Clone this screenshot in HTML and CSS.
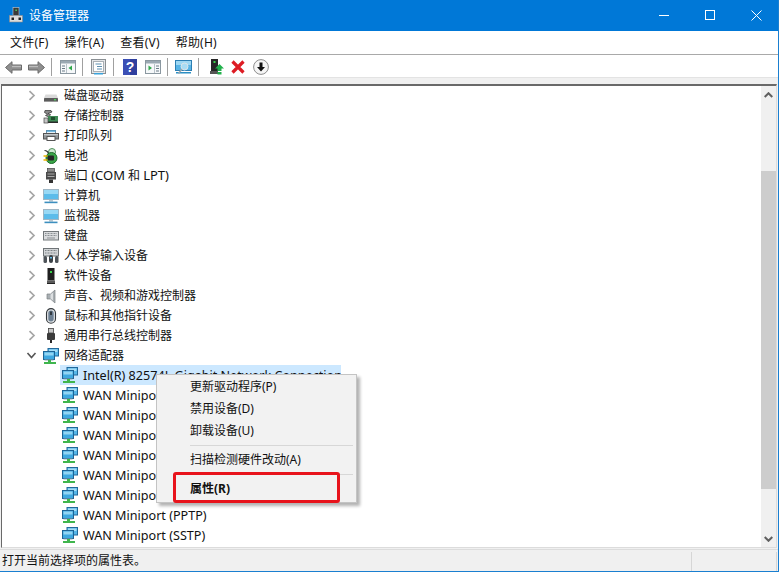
FILE: index.html
```html
<!DOCTYPE html>
<html lang="zh-CN">
<head>
<meta charset="utf-8">
<title>设备管理器</title>
<link rel="stylesheet" href="styles.css">
</head>
<body>
<svg class="defs" xmlns="http://www.w3.org/2000/svg">
  <symbol id="chev" viewBox="0 0 9 11"><path d="M2.500 1.200 7 5.500 2.500 9.800" fill="none" stroke="#a6a6a6" stroke-width="1.700"/></symbol>
  <symbol id="chev-open" viewBox="0 0 11 9"><path d="M1.500 2 5.500 6.500 9.500 2" fill="none" stroke="#555" stroke-width="1.600"/></symbol>
  <symbol id="i-disk" viewBox="0 0 16 16"><path d="M2.500 6.500h11l1.500 3.500H1z" fill="#d9d9d9"/><rect x="1" y="10" width="14" height="3.500" rx=".6" fill="#5c5c5c"/><rect x="1" y="13" width="14" height="1" fill="#9a9a9a"/><rect x="11" y="11" width="2" height="1.400" fill="#4fd05a"/></symbol>
  <symbol id="i-storage" viewBox="0 0 16 16"><path d="M2 2.500h6l1 1.500-4 1.500 2.500 1L6 9 2.500 7.500l2-1.200L1.500 4.500z" fill="#8a8a8a" stroke="#2e2e2e" stroke-width=".7"/><rect x="5" y="8" width="10" height="6" fill="#3f8a55"/><rect x="5" y="13.500" width="10" height="1.500" fill="#2b2b2b"/><rect x="8" y="9" width="4" height="3" fill="#1e4d2c"/><rect x="1" y="10" width="4" height="5" fill="#c6c6c6" stroke="#444" stroke-width=".7"/></symbol>
  <symbol id="i-printer" viewBox="0 0 16 16"><rect x="3.500" y="2.500" width="9" height="3" fill="#e8f2f8" stroke="#6a8aa0"/><rect x="3.500" y="2.500" width="9" height="1.200" fill="#46a3d8"/><rect x=".5" y="5.500" width="15" height="5.500" fill="#8e9498" stroke="#555"/><rect x="4" y="8.500" width="8" height="4" fill="#fff" stroke="#555"/><rect x="1" y="6.200" width="14" height="1" fill="#d0d4d6"/></symbol>
  <symbol id="i-battery" viewBox="0 0 16 16"><circle cx="9" cy="4" r="3.500" fill="#cfe9d2" stroke="#4f8f5b"/><path d="M1.500 2.500c2 0 4 1.500 4 4" fill="none" stroke="#333" stroke-width="1.200"/><circle cx="8.500" cy="10" r="5.500" fill="#3aa748" stroke="#1e6a2a"/><rect x="4.500" y="7.500" width="6.500" height="5" rx="1" fill="#262626"/><path d="M.5 8h4M.5 12h4" stroke="#f0b400" stroke-width="1.400"/></symbol>
  <symbol id="i-port" viewBox="0 0 16 16"><rect x="4.500" y=".5" width="7" height="3.500" fill="#8c8c8c" stroke="#444" stroke-width=".7"/><rect x="3" y="4" width="10" height="7.500" fill="#4a4a4a"/><rect x="4.500" y="5.500" width="7" height="1" fill="#a8a8a8"/><rect x="4.500" y="8" width="7" height="1" fill="#a8a8a8"/><rect x="6" y="11.500" width="4" height="3.500" fill="#333"/></symbol>
  <symbol id="i-monitor" viewBox="0 0 16 16"><rect x=".5" y="1.500" width="15" height="10" fill="#5cbcea" stroke="#9fb6c4"/><rect x="1" y="2" width="14" height="4" fill="#98d9f5"/><rect x="6" y="12" width="4" height="1.600" fill="#b9c8d1"/><rect x="1.500" y="13.600" width="13" height="1.600" fill="#3d8fbf"/></symbol>
  <symbol id="i-keyboard" viewBox="0 0 16 16"><rect x=".5" y="3.500" width="15" height="8.500" fill="#dadcde" stroke="#73787b"/><path d="M2 5.500h12M2 7.500h12" stroke="#8b9094" stroke-width="1" stroke-dasharray="1 .5"/><rect x="4" y="9.500" width="8" height="1" fill="#8b9094"/></symbol>
  <symbol id="i-hid" viewBox="0 0 16 16"><rect x=".5" y=".5" width="15" height="7.500" fill="#d2d5d7" stroke="#6f7477"/><path d="M2 2.500h12M2 5h12" stroke="#7d8286" stroke-dasharray="1 .5"/><rect x=".5" y="8" width="3.500" height="7" rx="1.500" fill="#4d5358"/><rect x="12" y="8" width="3.500" height="7" rx="1.500" fill="#4d5358"/><rect x="6" y="7" width="4" height="8" rx="2" fill="#3b4146"/><rect x="7" y="9" width="2" height="1.500" fill="#5db7e0"/></symbol>
  <symbol id="i-soft" viewBox="0 0 16 16"><rect x="4.500" y="0" width="7" height="12.500" fill="#1f1f1f"/><rect x="7" y="3" width="2" height="2" fill="#39d24a"/><rect x="4" y="12.500" width="8" height="2.500" fill="#5a5a5a"/><rect x="4" y="15" width="8" height="1" fill="#222"/></symbol>
  <symbol id="i-sound" viewBox="0 0 16 16"><path d="M12 2v13L7.500 11H4V6h3.500z" fill="#a9afb3" stroke="#7b8185" stroke-width=".7"/><path d="M10 4.500v8L7.500 10.500V6.500z" fill="#dcdfe1"/></symbol>
  <symbol id="i-mouse" viewBox="0 0 16 16"><rect x="3.500" y=".6" width="9" height="14.600" rx="4.500" fill="#dfe2e4" stroke="#33383c" stroke-width="1.100"/><rect x="5.300" y="2.500" width="5.400" height="11" rx="2.700" fill="#6c7f92"/><rect x="7.200" y="3.500" width="1.600" height="3.500" fill="#23282c"/></symbol>
  <symbol id="i-usb" viewBox="0 0 16 16"><rect x="5.500" y=".5" width="5" height="4.500" fill="#c6c6c6" stroke="#444" stroke-width=".8"/><rect x="4" y="5" width="8" height="7" rx="1" fill="#3b3b3b"/><rect x="7" y="12" width="2" height="3" fill="#2a2a2a"/></symbol>
  <symbol id="i-net" viewBox="0 0 16 16">
    <rect x="5" y=".5" width="10.500" height="7.500" fill="#55b6e8" stroke="#22699b"/>
    <rect x="6" y="1.500" width="8.500" height="2.500" fill="#a5dcf5"/>
    <rect x=".5" y="3.500" width="11" height="8" fill="#3ea8e0" stroke="#1d6496"/>
    <rect x="1.500" y="4.500" width="9" height="3" fill="#93d5f3"/>
    <rect x="1.500" y="11.500" width="9" height="1" fill="#8aa7b8"/>
    <rect x="5" y="12" width="3" height="2" fill="#3fb54d"/>
    <rect x="1" y="14" width="12" height="2" fill="#3fb54d"/>
  </symbol>
</svg>

<div class="window">
  <header class="titlebar">
    <svg class="app-icon" width="14" height="16" viewBox="0 0 14 16"><rect x="4" y="0.500" width="6" height="8" fill="#3a3a3a" stroke="#ccc" stroke-width=".6"/><rect x="6.400" y="2.500" width="1.500" height="1.500" fill="#4fd05a"/><rect x="0.500" y="8.500" width="13" height="6.500" fill="#dcdcdc" stroke="#888" stroke-width=".6"/><rect x="2.500" y="10.500" width="2.500" height="2.500" fill="#222"/><rect x="9.500" y="10.500" width="2.500" height="2.500" fill="#222"/></svg>
    <span class="title">设备管理器</span>
    <div class="winctl">
      <span class="winbtn"><svg width="10" height="10" viewBox="0 0 10 10"><path d="M0 5.500h10" stroke="#fff"/></svg></span>
      <span class="winbtn"><svg width="10" height="10" viewBox="0 0 10 10"><rect x=".5" y=".5" width="9" height="9" fill="none" stroke="#fff"/></svg></span>
      <span class="winbtn"><svg width="11" height="11" viewBox="0 0 11 11"><path d="M.5.5l10 10M10.500.5l-10 10" stroke="#fff" stroke-width="1"/></svg></span>
    </div>
  </header>

  <nav class="menubar">
    <span class="menu-item">文件(F)</span>
    <span class="menu-item">操作(A)</span>
    <span class="menu-item">查看(V)</span>
    <span class="menu-item">帮助(H)</span>
  </nav>

  <div class="toolbar">
    <span class="tb"><svg width="17" height="13" viewBox="0 0 17 13"><path d="M.5 6.500 7 .7V4h9.500v5H7v3.300z" fill="#8f8f8f" stroke="#6a6a6a"/><rect x="7" y="4.800" width="9" height="1.400" fill="#bdbdbd"/></svg></span>
    <span class="tb"><svg width="17" height="13" viewBox="0 0 17 13"><path d="M16.500 6.500 10 .7V4H.5v5H10v3.300z" fill="#8f8f8f" stroke="#6a6a6a"/><rect x="1" y="4.800" width="9" height="1.400" fill="#bdbdbd"/></svg></span>
    <i class="tb-sep"></i>
    <span class="tb"><svg width="16" height="14" viewBox="0 0 16 14"><rect x=".5" y=".5" width="15" height="13" fill="#f6f8fa" stroke="#8a97a0"/><rect x="1" y="1" width="14" height="2.500" fill="#9aa8b2"/><path d="M2 6h3M2 8.500h3M2 11h3" stroke="#6a7a86"/><path d="M6.500 4v9" stroke="#b8c2c9"/><path d="M12 5.500v5L8.500 8z" fill="#2fa84a"/></svg></span>
    <i class="tb-sep"></i>
    <span class="tb"><svg width="15" height="16" viewBox="0 0 15 16"><rect x=".5" y=".5" width="14" height="14" fill="#e4e6e8" stroke="#8a8f93"/><rect x="2.500" y="2.500" width="10" height="10" fill="#fff" stroke="#a9b0b5"/><path d="M4.500 5h6M6 7.500h5M6 10h5" stroke="#5d8fb0"/><rect x="3" y="14" width="9" height="1.500" fill="#3aa3dc"/></svg></span>
    <i class="tb-sep"></i>
    <span class="tb"><svg width="14" height="16" viewBox="0 0 14 16"><rect width="14" height="16" fill="#2f3f9e"/><rect width="7" height="16" fill="#3b4fb5"/><text class="help-q" x="7" y="13" text-anchor="middle">?</text></svg></span>
    <span class="tb"><svg width="16" height="14" viewBox="0 0 16 14"><rect x=".5" y=".5" width="15" height="13" fill="#f6f8fa" stroke="#8a97a0"/><rect x="1" y="1" width="14" height="2.500" fill="#9aa8b2"/><path d="M11 6h3M11 8.500h3M11 11h3" stroke="#6a7a86"/><path d="M9.500 4v9" stroke="#b8c2c9"/><path d="M3.500 5.500v5L7 8z" fill="#2fa84a"/></svg></span>
    <i class="tb-sep"></i>
    <span class="tb"><svg width="17" height="15" viewBox="0 0 17 15"><rect x=".5" y=".5" width="16" height="10" fill="#58b4e6" stroke="#2d7fb3"/><rect x="1" y="1" width="15" height="4" fill="#9dd7f3"/><rect x="1" y="12" width="15" height="1.500" fill="#2d8fc4"/><circle cx="9.500" cy="6.500" r="3.500" fill="#a9dcf4" stroke="#dde6ea"/><path d="M7 9 3.500 13.500" stroke="#9aa6ad" stroke-width="1.500"/></svg></span>
    <i class="tb-sep"></i>
    <span class="tb tb-up"><svg width="14" height="16" viewBox="0 0 14 16"><rect x="1" y="0" width="7" height="12" fill="#262626"/><rect x="3.500" y="2" width="2" height="2" fill="#39d24a"/><rect x="0" y="12" width="8" height="3" fill="#555"/><path d="M9.500 5 14 9.500h-2.500V12h-4V9.500H5z" fill="#22b14c"/><rect x="7.500" y="13" width="4" height="2.500" fill="#22b14c"/></svg></span>
    <span class="tb"><svg width="14" height="14" viewBox="0 0 14 14"><path d="M1.500 1.500 12.500 12.500M12.500 1.500 1.500 12.500" stroke="#dd1c24" stroke-width="3.200"/></svg></span>
    <span class="tb"><svg width="16" height="16" viewBox="0 0 16 16"><circle cx="8" cy="8" r="7.400" fill="#f5f5f5" stroke="#8d8d8d"/><path d="M6.500 3.500h3V8H12l-4 4.500L4 8h2.500z" fill="#111"/></svg></span>
  </div>

  <div class="strip"></div>

  <main class="content">
    <div class="tree">
      <ul class="tree-list">
        <li class="row"><svg class="chev"><use href="#chev"/></svg><svg class="ico"><use href="#i-disk"/></svg><span>磁盘驱动器</span></li>
        <li class="row"><svg class="chev"><use href="#chev"/></svg><svg class="ico"><use href="#i-storage"/></svg><span>存储控制器</span></li>
        <li class="row"><svg class="chev"><use href="#chev"/></svg><svg class="ico"><use href="#i-printer"/></svg><span>打印队列</span></li>
        <li class="row"><svg class="chev"><use href="#chev"/></svg><svg class="ico"><use href="#i-battery"/></svg><span>电池</span></li>
        <li class="row row-mixed"><svg class="chev"><use href="#chev"/></svg><svg class="ico"><use href="#i-port"/></svg><span>端口 <span class="lat">(COM</span> 和 <span class="lat">LPT)</span></span></li>
        <li class="row"><svg class="chev"><use href="#chev"/></svg><svg class="ico"><use href="#i-monitor"/></svg><span>计算机</span></li>
        <li class="row"><svg class="chev"><use href="#chev"/></svg><svg class="ico"><use href="#i-monitor"/></svg><span>监视器</span></li>
        <li class="row"><svg class="chev"><use href="#chev"/></svg><svg class="ico"><use href="#i-keyboard"/></svg><span>键盘</span></li>
        <li class="row"><svg class="chev"><use href="#chev"/></svg><svg class="ico"><use href="#i-hid"/></svg><span>人体学输入设备</span></li>
        <li class="row"><svg class="chev"><use href="#chev"/></svg><svg class="ico"><use href="#i-soft"/></svg><span>软件设备</span></li>
        <li class="row"><svg class="chev"><use href="#chev"/></svg><svg class="ico"><use href="#i-sound"/></svg><span>声音、视频和游戏控制器</span></li>
        <li class="row"><svg class="chev"><use href="#chev"/></svg><svg class="ico"><use href="#i-mouse"/></svg><span>鼠标和其他指针设备</span></li>
        <li class="row"><svg class="chev"><use href="#chev"/></svg><svg class="ico"><use href="#i-usb"/></svg><span>通用串行总线控制器</span></li>
        <li class="row"><svg class="chev chev-down"><use href="#chev-open"/></svg><svg class="ico"><use href="#i-net"/></svg><span>网络适配器</span></li>
        <li class="row child selected"><svg class="ico"><use href="#i-net"/></svg><span class="lat">Intel(R) 82574L Gigabit Network Connection</span></li>
        <li class="row child"><svg class="ico"><use href="#i-net"/></svg><span class="lat">WAN Miniport (IKEv2)</span></li>
        <li class="row child"><svg class="ico"><use href="#i-net"/></svg><span class="lat">WAN Miniport (IP)</span></li>
        <li class="row child"><svg class="ico"><use href="#i-net"/></svg><span class="lat">WAN Miniport (IPv6)</span></li>
        <li class="row child"><svg class="ico"><use href="#i-net"/></svg><span class="lat">WAN Miniport (L2TP)</span></li>
        <li class="row child"><svg class="ico"><use href="#i-net"/></svg><span class="lat">WAN Miniport (Monitor)</span></li>
        <li class="row child"><svg class="ico"><use href="#i-net"/></svg><span class="lat">WAN Miniport (PPPOE)</span></li>
        <li class="row child"><svg class="ico"><use href="#i-net"/></svg><span class="lat">WAN Miniport (PPTP)</span></li>
        <li class="row child"><svg class="ico"><use href="#i-net"/></svg><span class="lat">WAN Miniport (SSTP)</span></li>
      </ul>
    </div>
    <div class="scrollbar">
      <div class="sb-btn"><svg width="9" height="6" viewBox="0 0 9 6"><path d="M.7 5 4.500 1.200 8.300 5" fill="none" stroke="#606060" stroke-width="2"/></svg></div>
      <div class="sb-gap"></div>
      <div class="sb-thumb"></div>
      <div class="sb-rest"></div>
      <div class="sb-btn"><svg width="9" height="6" viewBox="0 0 9 6"><path d="M.7 1 4.500 4.800 8.300 1" fill="none" stroke="#606060" stroke-width="2"/></svg></div>
    </div>

    <div class="ctx">
      <div class="ctx-item">更新驱动程序(P)</div>
      <div class="ctx-item">禁用设备(D)</div>
      <div class="ctx-item">卸载设备(U)</div>
      <div class="ctx-sep"></div>
      <div class="ctx-item">扫描检测硬件改动(A)</div>
      <div class="ctx-sep"></div>
      <div class="ctx-item ctx-default">属性(R)</div>
      <div class="ctx-mark"></div>
    </div>
  </main>

  <footer class="status">
    <span class="st-main">打开当前选择项的属性表。</span>
    <span class="st-cell"></span>
    <span class="st-end"></span>
  </footer>
</div>
</body>
</html>
```
FILE: styles.css
```css
* { box-sizing: border-box; }
html, body { margin: 0; padding: 0; background: #fff; }
body {
  width: 780px;
  height: 573px;
  overflow: hidden;
  font-family: "Noto Sans", "Noto Sans CJK SC", sans-serif;
  font-size: 12px;
  color: #111;
}
.defs { display: none; }

.window {
  width: 779px;
  height: 572px;
  display: flex;
  flex-direction: column;
  border-right: 1px solid #1a7fd0;
  border-bottom: 1px solid #1a7fd0;
  background: #f0f0f0;
}

.titlebar {
  flex: none;
  height: 31px;
  display: flex;
  align-items: center;
  background: #0078d7;
  color: #fff;
  padding: 0 0 1px 9px;
}
.app-icon { flex: none; }
.title { margin-left: 6px; }
.winctl { margin-left: auto; margin-right: -1px; display: flex; }
.winbtn { width: 46px; height: 30px; display: flex; align-items: center; justify-content: center; }

.menubar {
  flex: none;
  height: 24px;
  display: flex;
  align-items: center;
  background: #fff;
  border-bottom: 1px solid #a9a9a9;
  padding: 1px 0 0 2px;
}
.menu-item { padding: 0 8px; line-height: 22px; letter-spacing: .2px; }

.toolbar {
  flex: none;
  height: 22px;
  display: flex;
  align-items: center;
  background: #fff;
  padding: 2px 0 0 2px;
}
.tb { width: 23px; height: 20px; display: flex; align-items: center; justify-content: center; }
.tb-up { padding-left: 4px; }
.tb-sep { flex: none; width: 1px; height: 18px; margin: 0 4px 0 3px; background: #a0a0a0; }
.help-q { font: bold 14px "Liberation Sans", sans-serif; fill: #fff; }

.strip { flex: none; height: 7px; background: #f0f0f0; border-top: 1px solid #e3e3e3; }

.content {
  position: relative;
  flex: 1;
  min-height: 0;
  display: flex;
  margin: 0 1px 1px 1px;
  border-top: 2px solid #696969;
  border-left: 1px solid #696969;
  border-bottom: 1px solid #dcdcdc;
  border-right: 1px solid #dcdcdc;
  background: #fff;
}
.tree { flex: 1; min-width: 0; overflow: hidden; background: #fff; }
.tree-list { list-style: none; margin: -1px 0 0; padding: 0; }
.row {
  height: 20px;
  display: flex;
  align-items: center;
  position: relative;
  white-space: nowrap;
  padding: 2px 0 0 62px;
  line-height: 18px;
}
.row-mixed { padding-top: 0; line-height: 20px; }
.row .chev { position: absolute; left: 25px; top: 5px; width: 9px; height: 11px; }
.row .chev-down { left: 24px; top: 6px; width: 11px; height: 9px; }
.row .ico { position: absolute; left: 41px; top: 3px; width: 16px; height: 16px; }
.row.child { padding: 2px 0 0 81px; line-height: 18px; }
.row.child .ico { left: 60px; top: 2px; }
.row.selected { background: #cce8ff; margin-left: 58px; padding-left: 23px; width: 281px; overflow: hidden; }
.row.selected .ico { left: 2px; }
.lat { font-size: 12.6px; }
.row-mixed .lat { font-size: 13px; }

.scrollbar { flex: none; width: 15px; display: flex; flex-direction: column; background: #f0f0f0; }
.sb-btn { flex: none; height: 17px; display: flex; align-items: center; justify-content: center; }
.sb-gap { flex: none; height: 68px; }
.sb-thumb { flex: none; height: 318px; background: #cdcdcd; }
.sb-rest { flex: 1; }

.ctx {
  position: absolute;
  left: 154px;
  top: 288px;
  width: 201px;
  height: 129px;
  padding: 1px 2px;
  background: #f2f2f2;
  border: 1px solid #c4c4c4;
  box-shadow: 3px 3px 3px rgba(0, 0, 0, .3);
}
.ctx-item { height: 22px; line-height: 22px; padding-left: 31px; }
.ctx-sep { height: 1px; margin: 3px 1px 3px 31px; background: #d7d7d7; }
.ctx-default { font-weight: 700; }
.ctx-mark {
  position: absolute;
  left: 16px;
  top: 97px;
  width: 167px;
  height: 31px;
  border: 3px solid #e8141c;
  border-radius: 3px;
}

.status {
  flex: none;
  height: 22px;
  display: flex;
  align-items: center;
  padding: 0 0 2px 2px;
  border-top: 1px solid #dcdcdc;
  background: #f0f0f0;
}
.st-main { flex: none; width: 689px; }
.st-cell { flex: none; align-self: flex-end; margin-bottom: -2px; width: 86px; height: 19px; border-left: 1px solid #d6d6d6; border-right: 1px solid #d6d6d6; }
.st-end { flex: 1; }
```
